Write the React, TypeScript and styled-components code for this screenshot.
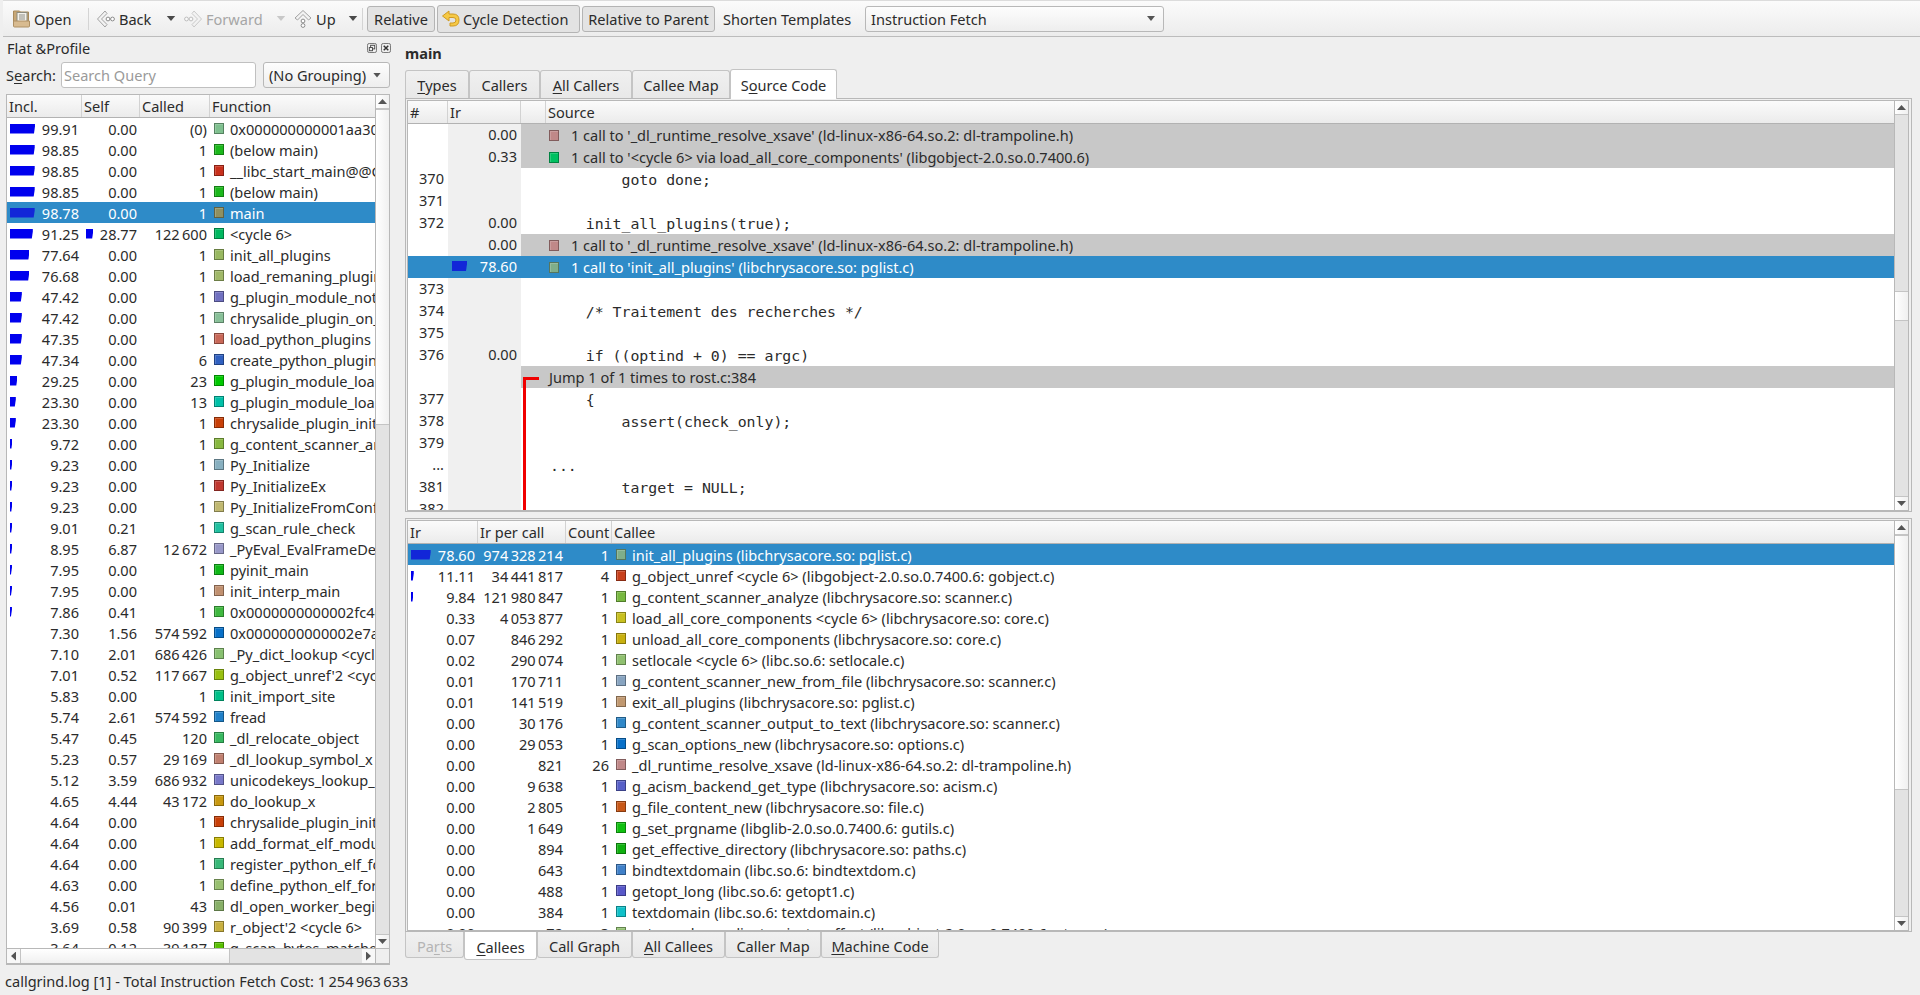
import React from 'react';
import styled, { createGlobalStyle } from 'styled-components';

const flatCols = '75px 58px 70px 1fr';
const calleeCols = '70px 88px 46px 1fr';
const sourceCols = '40px 73px 25px 1fr';

const GlobalStyle = createGlobalStyle`
  html, body {
    margin: 0;
    padding: 0;
    background: #efefef;
    overflow: hidden;
  }
  body {
    font-family: "Noto Sans", "DejaVu Sans", sans-serif;
    font-size: 14.55px;
    color: #2b2b2b;
  }
`;

const Page = styled.div`
  width: 1920px;
  height: 995px;
  display: flex;
  flex-direction: column;
  background: #efefef;
  overflow: hidden;
`;

const Toolbar = styled.div`
  height: 35px;
  margin-left: 3px;
  padding-left: 9px;
  display: flex;
  align-items: center;
  border-top: 1px solid #dcdcdc;
  border-bottom: 1px solid #bcbcbc;
  background: linear-gradient(#fbfbfb, #ececec);
  flex: none;
`;

const Tool = styled.div<{ $w: number; $off?: boolean }>`
  width: ${(p) => p.$w}px;
  flex: none;
  display: flex;
  align-items: center;
  gap: 3px;
  color: ${(p) => (p.$off ? '#a6a6a6' : '#2b2b2b')};
`;

const ToolSep = styled.div<{ $ml: number; $mr: number }>`
  width: 1px;
  height: 22px;
  margin: 0 ${(p) => p.$mr}px 0 ${(p) => p.$ml}px;
  background: #d4d4d4;
  flex: none;
`;

const DropArrow = styled.div<{ $off?: boolean; $mr?: number }>`
  width: 10px;
  height: 5px;
  flex: none;
  margin-right: ${(p) => p.$mr ?? 0}px;
  background: ${(p) => (p.$off ? '#c8c8c8' : '#4a4a4a')};
  clip-path: polygon(8% 0, 92% 0, 50% 100%);
`;

const ToggleButton = styled.div<{ $w: number; $ml?: number }>`
  width: ${(p) => p.$w}px;
  height: 26px;
  margin-left: ${(p) => p.$ml ?? 0}px;
  box-sizing: border-box;
  flex: none;
  display: flex;
  align-items: center;
  justify-content: center;
  background: #e3e3e3;
  border: 1px solid #b4b4b4;
  border-radius: 3px;
`;

const CycleButton = styled(ToggleButton)`
  height: 28px;
  padding-left: 3px;
  justify-content: flex-start;
  gap: 3px;
`;

const ToolLabel = styled.div<{ $w: number; $ml: number }>`
  width: ${(p) => p.$w}px;
  margin-left: ${(p) => p.$ml}px;
  flex: none;
`;

const Combo = styled.div<{ $w: number }>`
  width: ${(p) => p.$w}px;
  height: 26px;
  box-sizing: border-box;
  flex: none;
  padding: 0 8px 0 5px;
  display: flex;
  align-items: center;
  justify-content: space-between;
  background: linear-gradient(#fdfdfd, #eeeeee);
  border: 1px solid #b8b8b8;
  border-radius: 3px;
`;

const ComboArrow = styled.div`
  width: 8px;
  height: 5px;
  background: #555;
  clip-path: polygon(0 0, 100% 0, 50% 100%);
`;

const Main = styled.div`
  flex: 1;
  min-height: 0;
  display: flex;
  padding-left: 6px;
`;

const LeftDock = styled.div`
  width: 384px;
  flex: none;
  display: flex;
  flex-direction: column;
`;

const DockTitle = styled.div`
  height: 24px;
  padding: 0 0 2px 1px;
  box-sizing: border-box;
  display: flex;
  align-items: center;
  justify-content: space-between;
`;

const DockButtons = styled.div`
  display: flex;
  gap: 4px;
  margin-right: -1px;
`;

const SearchRow = styled.div`
  margin-top: 1px;
  height: 26px;
  display: flex;
  align-items: center;
`;

const SearchLabel = styled.div`
  width: 55px;
  flex: none;
`;

const SearchInput = styled.div`
  width: 195px;
  height: 26px;
  box-sizing: border-box;
  margin-right: 7px;
  padding: 0 2px;
  flex: none;
  display: flex;
  align-items: center;
  color: #9a9a9a;
  background: #fff;
  border: 1px solid #c0c0c0;
  border-radius: 3px;
`;

const Frame = styled.div<{ $h: number }>`
  height: ${(p) => p.$h}px;
  box-sizing: border-box;
  display: flex;
  flex-direction: column;
  background: #fff;
  border: 1px solid #b8b8b8;
  flex: none;
`;

const FlatFrame = styled(Frame)`
  margin-top: 6px;
  border-bottom-width: 2px;
`;

const FrameBody = styled.div`
  flex: 1;
  min-height: 0;
  display: flex;
`;

const Pane = styled.div`
  flex: 1;
  min-width: 0;
  display: flex;
  flex-direction: column;
  overflow: hidden;
  position: relative;
`;

const Rows = styled.div`
  flex: 1;
  min-height: 0;
  overflow: hidden;
`;

const Header = styled.div<{ $cols: string }>`
  height: 22px;
  flex: none;
  display: grid;
  grid-template-columns: ${(p) => p.$cols};
  background: linear-gradient(#fbfbfb, #ebebeb);
  border-bottom: 1px solid #b2b2b2;
`;

const HeaderCell = styled.div`
  padding-left: 2px;
  display: flex;
  align-items: center;
  border-right: 1px solid #d2d2d2;
  white-space: nowrap;
  overflow: hidden;
  &:last-child {
    border-right: 0;
  }
`;

const DataRow = styled.div<{ $cols: string; $sel?: boolean }>`
  height: 21px;
  display: grid;
  grid-template-columns: ${(p) => p.$cols};
  background: ${(p) => (p.$sel ? '#2e8bc8' : 'transparent')};
  color: ${(p) => (p.$sel ? '#fff' : '#2b2b2b')};
`;

const NumCell = styled.div<{ $pl?: number }>`
  display: flex;
  align-items: center;
  padding: 0 3px 0 ${(p) => p.$pl ?? 3}px;
  white-space: nowrap;
  overflow: hidden;
`;

const NumText = styled.span`
  margin-left: auto;
`;

const NameCell = styled.div`
  display: flex;
  align-items: center;
  gap: 6px;
  padding-left: 4px;
  white-space: nowrap;
  overflow: hidden;
`;

const Bar = styled.div<{ $sel?: boolean }>`
  height: 10px;
  flex: none;
  background: ${(p) => (p.$sel ? '#1226d8' : '#0000ee')};
  clip-path: polygon(0 0, 100% 0, 100% 30%, calc(100% - 1px) 100%, 0 100%);
`;

const Swatch = styled.div<{ $c: string }>`
  width: 10px;
  height: 11px;
  box-sizing: border-box;
  flex: none;
  background: ${(p) => p.$c};
  border: 1px solid rgba(0, 0, 0, 0.32);
  box-shadow: inset 1px 1px 0 rgba(255, 255, 255, 0.18);
`;

const ScrollColumn = styled.div`
  width: 13px;
  flex: none;
  display: flex;
  flex-direction: column;
  background: #e3e3e3;
  border-left: 1px solid #b8b8b8;
`;

const ScrollButton = styled.div`
  height: 13px;
  flex: none;
  display: flex;
  align-items: center;
  justify-content: center;
  background: linear-gradient(90deg, #ffffff, #f0f0f0);
`;

const UpButton = styled(ScrollButton)`
  border-bottom: 1px solid #c4c4c4;
`;

const DownButton = styled(ScrollButton)`
  border-top: 1px solid #c4c4c4;
`;

const TriUp = styled.div`
  width: 9px;
  height: 5px;
  background: #555;
  clip-path: polygon(50% 0, 100% 100%, 0 100%);
`;

const TriDown = styled(TriUp)`
  clip-path: polygon(0 0, 100% 0, 50% 100%);
`;

const TrackGap = styled.div<{ $h: number }>`
  height: ${(p) => p.$h}px;
  flex: none;
`;

const TrackFill = styled.div`
  flex: 1;
`;

const Thumb = styled.div<{ $h: number }>`
  height: ${(p) => p.$h}px;
  box-sizing: border-box;
  flex: none;
  background: linear-gradient(90deg, #ffffff, #f0f0f0);
  border-top: 1px solid #c4c4c4;
  border-bottom: 1px solid #c4c4c4;
`;

const HScroll = styled.div`
  height: 14px;
  flex: none;
  display: flex;
  background: #e3e3e3;
  border-top: 1px solid #b8b8b8;
`;

const HButton = styled.div`
  width: 13px;
  flex: none;
  display: flex;
  align-items: center;
  justify-content: center;
  background: #f8f8f8;
`;

const TriLeft = styled.div`
  width: 5px;
  height: 9px;
  background: #555;
  clip-path: polygon(0 50%, 100% 0, 100% 100%);
`;

const TriRight = styled(TriLeft)`
  clip-path: polygon(0 0, 100% 50%, 0 100%);
`;

const HThumb = styled.div`
  width: 208px;
  flex: none;
  background: linear-gradient(#ffffff, #f0f0f0);
  border-left: 1px solid #c4c4c4;
  border-right: 1px solid #c4c4c4;
`;

const HFill = styled.div`
  flex: 1;
`;

const HCorner = styled.div`
  width: 13px;
  flex: none;
  background: #efefef;
  border-left: 1px solid #b8b8b8;
`;

const RightDock = styled.div`
  width: 1507px;
  margin-left: 15px;
  flex: none;
  display: flex;
  flex-direction: column;
`;

const FunctionTitle = styled.div`
  height: 32px;
  flex: none;
  display: flex;
  align-items: center;
  font-weight: 700;
`;

const TabBar = styled.div`
  height: 29px;
  display: flex;
  align-items: flex-end;
  flex: none;
`;

const Tab = styled.div<{ $w: number; $on?: boolean; $off?: boolean }>`
  width: ${(p) => p.$w}px;
  height: ${(p) => (p.$on ? 30 : 28)}px;
  box-sizing: border-box;
  flex: none;
  display: flex;
  align-items: center;
  justify-content: center;
  white-space: pre;
  position: relative;
  top: ${(p) => (p.$on ? 1 : 0)}px;
  z-index: ${(p) => (p.$on ? 1 : 0)};
  background: ${(p) => (p.$on ? '#fff' : 'linear-gradient(#f0f0f0, #e8e8e8)')};
  color: ${(p) => (p.$off ? '#b4b4b4' : '#2b2b2b')};
  border: 1px solid #c4c4c4;
  border-bottom: 0;
  border-radius: 3px 3px 0 0;
`;

const BottomTabBar = styled(TabBar)`
  height: 28px;
  align-items: flex-start;
`;

const BottomTab = styled(Tab)`
  height: ${(p) => (p.$on ? 28 : 26)}px;
  padding-top: 2px;
  top: 0;
  border-top: 0;
  border-bottom: 1px solid #c4c4c4;
  border-radius: 0 0 3px 3px;
`;

const U = styled.span`
  text-decoration: underline;
  text-underline-offset: 2px;
`;

const OuterPanel = styled.div<{ $h: number }>`
  height: ${(p) => p.$h}px;
  box-sizing: border-box;
  flex: none;
  padding: 1px 2px 0 1px;
  border: 1px solid #b8b8b8;
  background: #efefef;
`;

const InnerPanel = styled.div`
  height: 100%;
  box-sizing: border-box;
  display: flex;
  background: #fff;
  border: 1px solid #b8b8b8;
`;

const Splitter = styled.div`
  height: 6px;
  flex: none;
`;

const SourceRow = styled.div<{ $sel?: boolean }>`
  height: 22px;
  display: grid;
  grid-template-columns: ${sourceCols};
  background: ${(p) => (p.$sel ? '#2e8bc8' : 'transparent')};
  color: ${(p) => (p.$sel ? '#fff' : '#2b2b2b')};
`;

const LineNo = styled.div`
  padding: 0 4px 2px 0;
  display: flex;
  align-items: center;
  justify-content: flex-end;
`;

const IrCell = styled.div<{ $sel?: boolean }>`
  padding: 0 4px 2px 4px;
  display: flex;
  align-items: center;
  justify-content: space-between;
  background: ${(p) => (p.$sel ? 'transparent' : '#f0f0f0')};
`;

const SourceCell = styled.div<{ $note?: boolean }>`
  grid-column: span 2;
  padding-left: 28px;
  display: flex;
  align-items: center;
  gap: 12px;
  white-space: pre;
  overflow: hidden;
  background: ${(p) => (p.$note ? '#c8c8c8' : 'transparent')};
`;

const Code = styled.span`
  font-family: "DejaVu Sans Mono", "Liberation Mono", monospace;
  font-size: 14.85px;
  margin-left: 1px;
  padding-top: 1px;
`;

const JumpArrow = styled.div`
  position: absolute;
  left: 115px;
  top: 276px;
  bottom: 0;
  width: 13px;
  border-left: 3px solid #f00000;
  border-top: 3px solid #f00000;
`;

const StatusBar = styled.div`
  height: 27px;
  padding: 0 0 1px 5px;
  box-sizing: border-box;
  display: flex;
  align-items: center;
  flex: none;
`;

const NavSvg = styled.svg<{ $rotate: number; $off?: boolean }>`
  flex: none;
  transform: rotate(${(p) => p.$rotate}deg);
  opacity: ${(p) => (p.$off ? 0.5 : 1)};
`;

const IconSvg = styled.svg`
  flex: none;
`;

const n = '\u202f';

type FlatRow = [number, number, string, string, string];

const flatRows: FlatRow[] = [
  [99.91, 0, '(0)', '#7fc08f', '0x000000000001aa30'],
  [98.85, 0, '1', '#1cb81c', '(below main)'],
  [98.85, 0, '1', '#c8301c', '__libc_start_main@@GLIBC_2.34'],
  [98.85, 0, '1', '#1cb81c', '(below main)'],
  [98.78, 0, '1', '#8f9060', 'main'],
  [91.25, 28.77, `122${n}600`, '#00b860', '<cycle 6>'],
  [77.64, 0, '1', '#98b860', 'init_all_plugins'],
  [76.68, 0, '1', '#a0b868', 'load_remaning_plugins'],
  [47.42, 0, '1', '#7070c0', 'g_plugin_module_notify'],
  [47.42, 0, '1', '#88c098', 'chrysalide_plugin_on_load'],
  [47.35, 0, '1', '#c86858', 'load_python_plugins'],
  [47.34, 0, '6', '#3060c0', 'create_python_plugin'],
  [29.25, 0, '23', '#00c800', 'g_plugin_module_load'],
  [23.3, 0, '13', '#00c0a8', 'g_plugin_module_load'],
  [23.3, 0, '1', '#c84008', 'chrysalide_plugin_init'],
  [9.72, 0, '1', '#88b840', 'g_content_scanner_analyze'],
  [9.23, 0, '1', '#88b0c0', 'Py_Initialize'],
  [9.23, 0, '1', '#c03830', 'Py_InitializeEx'],
  [9.23, 0, '1', '#c0b870', 'Py_InitializeFromConfig'],
  [9.01, 0.21, '1', '#20c0a0', 'g_scan_rule_check'],
  [8.95, 6.87, `12${n}672`, '#9898c8', '_PyEval_EvalFrameDefault'],
  [7.95, 0, '1', '#10b818', 'pyinit_main'],
  [7.95, 0, '1', '#c09070', 'init_interp_main'],
  [7.86, 0.41, '1', '#40b840', '0x0000000000002fc40'],
  [7.3, 1.56, `574${n}592`, '#0870c8', '0x0000000000002e7a0'],
  [7.1, 2.01, `686${n}426`, '#88c070', '_Py_dict_lookup <cycle 6>'],
  [7.01, 0.52, `117${n}667`, '#98c010', "g_object_unref'2 <cycle 6>"],
  [5.83, 0, '1', '#00c088', 'init_import_site'],
  [5.74, 2.61, `574${n}592`, '#2080c8', 'fread'],
  [5.47, 0.45, '120', '#38b860', '_dl_relocate_object'],
  [5.23, 0.57, `29${n}169`, '#c08070', '_dl_lookup_symbol_x'],
  [5.12, 3.59, `686${n}932`, '#7878c8', 'unicodekeys_lookup_unicode'],
  [4.65, 4.44, `43${n}172`, '#c89810', 'do_lookup_x'],
  [4.64, 0, '1', '#c84008', 'chrysalide_plugin_init'],
  [4.64, 0, '1', '#c8b800', 'add_format_elf_module'],
  [4.64, 0, '1', '#38b878', 'register_python_elf_format'],
  [4.63, 0, '1', '#98c070', 'define_python_elf_format'],
  [4.56, 0.01, '43', '#88b068', 'dl_open_worker_begin'],
  [3.69, 0.58, `90${n}399`, '#c8b040', "r_object'2 <cycle 6>"],
  [3.64, 0.12, `39${n}187`, '#58c000', 'g_scan_bytes_matches'],
];

type CalleeRow = [number, string, string, string, string];

const calleeRows: CalleeRow[] = [
  [78.6, `974${n}328${n}214`, '1', '#7fae8a', 'init_all_plugins (libchrysacore.so: pglist.c)'],
  [11.11, `34${n}441${n}817`, '4', '#c8401c', 'g_object_unref <cycle 6> (libgobject-2.0.so.0.7400.6: gobject.c)'],
  [9.84, `121${n}980${n}847`, '1', '#78b840', 'g_content_scanner_analyze (libchrysacore.so: scanner.c)'],
  [0.33, `4${n}053${n}877`, '1', '#c8c020', 'load_all_core_components <cycle 6> (libchrysacore.so: core.c)'],
  [0.07, `846${n}292`, '1', '#c8b010', 'unload_all_core_components (libchrysacore.so: core.c)'],
  [0.02, `290${n}074`, '1', '#90c070', 'setlocale <cycle 6> (libc.so.6: setlocale.c)'],
  [0.01, `170${n}711`, '1', '#88a4c0', 'g_content_scanner_new_from_file (libchrysacore.so: scanner.c)'],
  [0.01, `141${n}519`, '1', '#c09870', 'exit_all_plugins (libchrysacore.so: pglist.c)'],
  [0, `30${n}176`, '1', '#3088c8', 'g_content_scanner_output_to_text (libchrysacore.so: scanner.c)'],
  [0, `29${n}053`, '1', '#0870c8', 'g_scan_options_new (libchrysacore.so: options.c)'],
  [0, '821', '26', '#c08888', '_dl_runtime_resolve_xsave (ld-linux-x86-64.so.2: dl-trampoline.h)'],
  [0, `9${n}638`, '1', '#5860c8', 'g_acism_backend_get_type (libchrysacore.so: acism.c)'],
  [0, `2${n}805`, '1', '#c85818', 'g_file_content_new (libchrysacore.so: file.c)'],
  [0, `1${n}649`, '1', '#10c010', 'g_set_prgname (libglib-2.0.so.0.7400.6: gutils.c)'],
  [0, '894', '1', '#10b010', 'get_effective_directory (libchrysacore.so: paths.c)'],
  [0, '643', '1', '#4080c8', 'bindtextdomain (libc.so.6: bindtextdom.c)'],
  [0, '488', '1', '#5858c8', 'getopt_long (libc.so.6: getopt1.c)'],
  [0, '384', '1', '#10c0c8', 'textdomain (libc.so.6: textdomain.c)'],
  [0, '72', '3', '#90c070', 'g_type_class_adjust_private_offset (libgobject-2.0.so.0.7400.6: gtype.c)'],
];

type SourceLine = {
  no?: string;
  ir?: string;
  bar?: number;
  code?: string;
  note?: string;
  swatch?: string;
  sel?: boolean;
};

const sourceLines: SourceLine[] = [
  { ir: '0.00', swatch: '#c08888', note: "1 call to '_dl_runtime_resolve_xsave' (ld-linux-x86-64.so.2: dl-trampoline.h)" },
  { ir: '0.33', swatch: '#00c060', note: "1 call to '<cycle 6> via load_all_core_components' (libgobject-2.0.so.0.7400.6)" },
  { no: '370', code: '        goto done;' },
  { no: '371' },
  { no: '372', ir: '0.00', code: '    init_all_plugins(true);' },
  { ir: '0.00', swatch: '#c08888', note: "1 call to '_dl_runtime_resolve_xsave' (ld-linux-x86-64.so.2: dl-trampoline.h)" },
  { ir: '78.60', bar: 15, swatch: '#7fae8a', note: "1 call to 'init_all_plugins' (libchrysacore.so: pglist.c)", sel: true },
  { no: '373' },
  { no: '374', code: '    /* Traitement des recherches */' },
  { no: '375' },
  { no: '376', ir: '0.00', code: '    if ((optind + 0) == argc)' },
  { note: 'Jump 1 of 1 times to rost.c:384' },
  { no: '377', code: '    {' },
  { no: '378', code: '        assert(check_only);' },
  { no: '379' },
  { no: '...', code: '...' },
  { no: '381', code: '        target = NULL;' },
  { no: '382' },
];

const NavIcon: React.FC<{ rotate?: number; off?: boolean }> = ({ rotate = 0, off }) => (
  <NavSvg width="20" height="20" viewBox="0 0 20 20" $rotate={rotate} $off={off}>
    <path d="M9 2 L1.5 10 L9 18 L11 15.5 L5.5 10 L11 4.5 Z" fill="#f2f2f2" stroke="#a2a2a2" strokeWidth="1" />
    <circle cx="12" cy="10" r="1.9" fill="#fff" stroke="#8a8a8a" />
    <circle cx="16.5" cy="10" r="1.9" fill="#fff" stroke="#8a8a8a" />
  </NavSvg>
);

const OpenIcon: React.FC = () => (
  <IconSvg width="19" height="20" viewBox="0 0 18 20">
    <path d="M1 2 L7 2 L8 3 L16 3 L16 16 L1 16 Z" fill="#c8a878" stroke="#a88a5c" />
    <rect x="4.5" y="3.5" width="10" height="10" fill="#f4f2ec" stroke="#8c8c80" />
    <path d="M6.5 6 H12.5 M6.5 8 H12.5 M6.5 10 H12.5" stroke="#8f8f88" />
    <path d="M1 12 L17 12 L17 17 Q17 18 16 18 L2 18 Q1 18 1 17 Z" fill="#d8bb90" stroke="#ae9064" />
  </IconSvg>
);

const CycleIcon: React.FC = () => (
  <IconSvg width="19" height="18" viewBox="0 0 19 18">
    <path
      d="M1.5 6 L8 1 L8 4 L12 4 Q18 4 18 10 Q18 16 12 16 L9 16 L9 13 L12 13 Q15 13 15 10 Q15 7.5 12 7.5 L8 7.5 L8 11 Z"
      fill="#f6c945"
      stroke="#cf9a22"
      strokeWidth="1"
    />
  </IconSvg>
);

const DockFloatIcon: React.FC = () => (
  <IconSvg width="10" height="10" viewBox="0 0 11 11">
    <rect x="0.5" y="0.5" width="10" height="10" rx="2" fill="none" stroke="#6a6a6a" />
    <rect x="4" y="2.5" width="4.5" height="4" fill="none" stroke="#444" />
    <rect x="2.5" y="5" width="3.5" height="3.5" fill="#efefef" stroke="#444" />
  </IconSvg>
);

const DockCloseIcon: React.FC = () => (
  <IconSvg width="10" height="10" viewBox="0 0 11 11">
    <rect x="0.5" y="0.5" width="10" height="10" rx="2" fill="none" stroke="#6a6a6a" />
    <path d="M3 3 L8 8 M8 3 L3 8" stroke="#333" strokeWidth="1.6" />
  </IconSvg>
);

const VScroll: React.FC<{ before: number; thumb: number }> = ({ before, thumb }) => (
  <ScrollColumn>
    <UpButton>
      <TriUp />
    </UpButton>
    <TrackGap $h={before} />
    <Thumb $h={thumb} />
    <TrackFill />
    <DownButton>
      <TriDown />
    </DownButton>
  </ScrollColumn>
);

const App: React.FC = () => {
  return (
    <Page>
      <GlobalStyle />
      <Toolbar>
        <Tool $w={76}>
          <OpenIcon />
          Open
        </Tool>
        <ToolSep $ml={0} $mr={7} />
        <Tool $w={70}>
          <NavIcon />
          Back
        </Tool>
        <DropArrow $mr={7} />
        <Tool $w={93} $off>
          <NavIcon rotate={180} off />
          Forward
        </Tool>
        <DropArrow $off $mr={7} />
        <Tool $w={55}>
          <NavIcon rotate={90} />
          Up
        </Tool>
        <DropArrow />
        <ToolSep $ml={4} $mr={4} />
        <ToggleButton $w={68}>Relative</ToggleButton>
        <CycleButton $w={143} $ml={2}>
          <CycleIcon />
          Cycle Detection
        </CycleButton>
        <ToggleButton $w={133} $ml={2}>
          Relative to Parent
        </ToggleButton>
        <ToolLabel $w={142} $ml={8}>
          Shorten Templates
        </ToolLabel>
        <Combo $w={299}>
          Instruction Fetch
          <ComboArrow />
        </Combo>
      </Toolbar>
      <Main>
        <LeftDock>
          <DockTitle>
            Flat &amp;Profile
            <DockButtons>
              <DockFloatIcon />
              <DockCloseIcon />
            </DockButtons>
          </DockTitle>
          <SearchRow>
            <SearchLabel>
              S<U>e</U>arch:
            </SearchLabel>
            <SearchInput>Search Query</SearchInput>
            <Combo $w={127}>
              (No Grouping)
              <ComboArrow />
            </Combo>
          </SearchRow>
          <FlatFrame $h={871}>
            <FrameBody>
              <Pane>
                <Header $cols={flatCols}>
                  <HeaderCell>Incl.</HeaderCell>
                  <HeaderCell>Self</HeaderCell>
                  <HeaderCell>Called</HeaderCell>
                  <HeaderCell>Function</HeaderCell>
                </Header>
                <Rows>
                  {flatRows.map(([incl, self, called, color, name], i) => {
                    const sel = name === 'main';
                    return (
                      <DataRow key={i} $cols={flatCols} $sel={sel}>
                        <NumCell>
                          {incl >= 7.5 && <Bar $sel={sel} style={{ width: incl * 0.25 }} />}
                          <NumText>{incl.toFixed(2)}</NumText>
                        </NumCell>
                        <NumCell $pl={4}>
                          {self >= 7.5 && <Bar $sel={sel} style={{ width: self * 0.25 }} />}
                          <NumText>{self.toFixed(2)}</NumText>
                        </NumCell>
                        <NumCell>
                          <NumText>{called}</NumText>
                        </NumCell>
                        <NameCell>
                          <Swatch $c={color} />
                          {name}
                        </NameCell>
                      </DataRow>
                    );
                  })}
                </Rows>
              </Pane>
              <VScroll before={0} thumb={316} />
            </FrameBody>
            <HScroll>
              <HButton>
                <TriLeft />
              </HButton>
              <HThumb />
              <HFill />
              <HButton>
                <TriRight />
              </HButton>
              <HCorner />
            </HScroll>
          </FlatFrame>
        </LeftDock>
        <RightDock>
          <FunctionTitle>main</FunctionTitle>
          <TabBar>
            <Tab $w={64}>
              <span>
                <U>T</U>ypes
              </span>
            </Tab>
            <Tab $w={71}>Callers</Tab>
            <Tab $w={92}>
              <span>
                <U>A</U>ll Callers
              </span>
            </Tab>
            <Tab $w={98}>Callee Map</Tab>
            <Tab $w={107} $on>
              <span>
                S<U>o</U>urce Code
              </span>
            </Tab>
          </TabBar>
          <OuterPanel $h={414}>
            <InnerPanel>
              <Pane>
                <Header $cols={sourceCols}>
                  <HeaderCell>#</HeaderCell>
                  <HeaderCell>Ir</HeaderCell>
                  <HeaderCell />
                  <HeaderCell>Source</HeaderCell>
                </Header>
                <Rows>
                  {sourceLines.map((line, i) => (
                    <SourceRow key={i} $sel={line.sel}>
                      <LineNo>{line.no}</LineNo>
                      <IrCell $sel={line.sel}>
                        {line.bar ? <Bar $sel style={{ width: line.bar }} /> : <span />}
                        {line.ir}
                      </IrCell>
                      <SourceCell $note={!!line.note && !line.sel}>
                        {line.swatch && <Swatch $c={line.swatch} />}
                        {line.note}
                        {line.code && <Code>{line.code}</Code>}
                      </SourceCell>
                    </SourceRow>
                  ))}
                </Rows>
                <JumpArrow />
              </Pane>
              <VScroll before={176} thumb={30} />
            </InnerPanel>
          </OuterPanel>
          <Splitter />
          <OuterPanel $h={414}>
            <InnerPanel>
              <Pane>
                <Header $cols={calleeCols}>
                  <HeaderCell>Ir</HeaderCell>
                  <HeaderCell>Ir per call</HeaderCell>
                  <HeaderCell>Count</HeaderCell>
                  <HeaderCell>Callee</HeaderCell>
                </Header>
                <Rows>
                  {calleeRows.map(([ir, perCall, count, color, name], i) => (
                    <DataRow key={i} $cols={calleeCols} $sel={i === 0}>
                      <NumCell>
                        {ir >= 7.5 && <Bar $sel={i === 0} style={{ width: ir * 0.25 }} />}
                        <NumText>{ir.toFixed(2)}</NumText>
                      </NumCell>
                      <NumCell>
                        <NumText>{perCall}</NumText>
                      </NumCell>
                      <NumCell>
                        <NumText>{count}</NumText>
                      </NumCell>
                      <NameCell>
                        <Swatch $c={color} />
                        {name}
                      </NameCell>
                    </DataRow>
                  ))}
                </Rows>
              </Pane>
              <VScroll before={0} thumb={255} />
            </InnerPanel>
          </OuterPanel>
          <BottomTabBar>
            <BottomTab $w={59} $off>
              <span>
                Pa<U>r</U>ts
              </span>
            </BottomTab>
            <BottomTab $w={73} $on>
              <span>
                <U>C</U>allees
              </span>
            </BottomTab>
            <BottomTab $w={95}>Call Graph</BottomTab>
            <BottomTab $w={93}>
              <span>
                <U>A</U>ll Callees
              </span>
            </BottomTab>
            <BottomTab $w={96}>Caller Map</BottomTab>
            <BottomTab $w={118}>
              <span>
                <U>M</U>achine Code
              </span>
            </BottomTab>
          </BottomTabBar>
        </RightDock>
      </Main>
      <StatusBar>callgrind.log [1] - Total Instruction Fetch Cost: 1{n}254{n}963{n}633</StatusBar>
    </Page>
  );
};

export default App;
